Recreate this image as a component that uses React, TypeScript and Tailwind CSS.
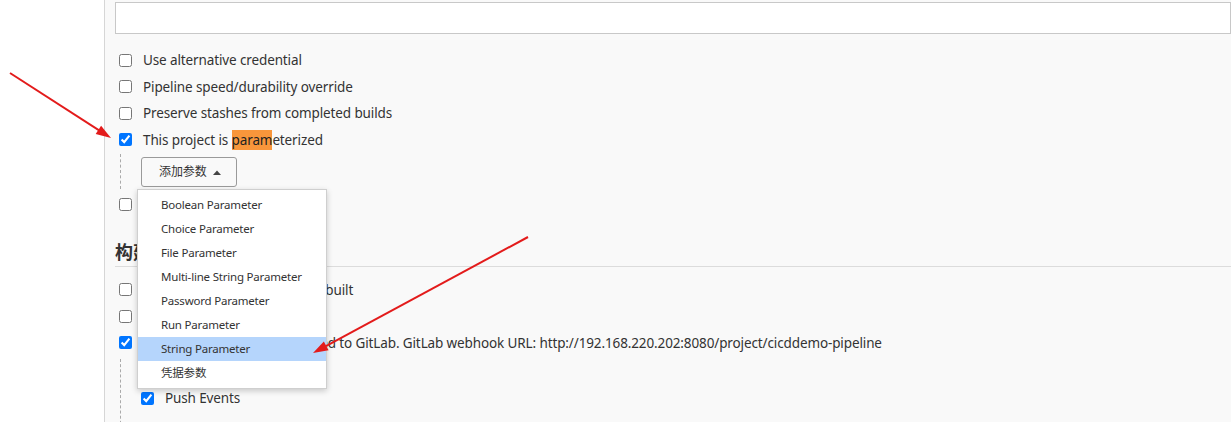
import React from 'react';

const font = { fontFamily: '"Noto Sans", "Noto Sans CJK SC", sans-serif' };

const params = [
  'Boolean Parameter',
  'Choice Parameter',
  'File Parameter',
  'Multi-line String Parameter',
  'Password Parameter',
  'Run Parameter',
  'String Parameter',
  '凭据参数',
];

function Check({ checked = false, label }: { checked?: boolean; label: React.ReactNode }) {
  return (
    <label className="flex h-[26.5px] items-center gap-[11px] whitespace-nowrap pl-[4px]">
      <input type="checkbox" readOnly checked={checked} className="m-0 h-[13px] w-[13px] accent-[#0075ff]" />
      <span>{label}</span>
    </label>
  );
}

function arrowHead(x1: number, y1: number, x2: number, y2: number) {
  const a = Math.atan2(y2 - y1, x2 - x1);
  const len = 15;
  const w = 5;
  const bx = x2 - len * Math.cos(a);
  const by = y2 - len * Math.sin(a);
  const px = -Math.sin(a) * w;
  const py = Math.cos(a) * w;
  return `${x2},${y2} ${bx + px},${by + py} ${bx - px},${by - py}`;
}

export default function App() {
  const arrows = [
    [10, 73, 111, 138],
    [528, 237, 313, 353],
  ];
  return (
    <div className="relative flex h-[422px] w-[1231px] overflow-hidden bg-white text-[13.5px] tracking-[-0.12px] text-[#333]" style={font}>
      <div className="w-[104px] shrink-0 bg-white" />
      <div className="flex-1 border-l border-[#d6d6d6] bg-[#f9f9f9] pl-[10px]">
        {/* text field */}
        <div className="mt-[2px] h-[32px] border border-[#c8c8c8] bg-white" />

        <div className="mt-[13px]">
          <Check label="Use alternative credential" />
          <Check label="Pipeline speed/durability override" />
          <Check label="Preserve stashes from completed builds" />
          <Check
            checked
            label={
              <>
                This project is <span className="bg-[#f9963b] py-[1px] text-[#222]">param</span>eterized
              </>
            }
          />
        </div>

        {/* parameters block */}
        <div className="relative ml-[5px] mt-[1px] border-l border-dashed border-[#aaa] pb-[2px] pl-[20px] pt-[3px]">
          <button className="flex h-[30px] w-[96px] items-center gap-[6px] rounded-[3px] border border-[#9a9a9a] bg-[#f9f9f9] pl-[17px] text-[12px] text-[#333]">
            添加参数
            <svg width="8" height="5" viewBox="0 0 8 5">
              <path d="M0 5L4 0.5L8 5Z" fill="#444" />
            </svg>
          </button>

          {/* dropdown menu */}
          <div className="absolute left-[16px] top-[35px] z-10 w-[190px] border border-[#cfcfcf] bg-white pb-[3px] pt-[3px] shadow-[0_2px_6px_rgba(0,0,0,0.2)]">
            {params.map((p) => (
              <div
                key={p}
                className={`flex h-[24px] items-center pl-[23px] text-[11.5px] tracking-[-0.2px] text-[#333] ${p === 'String Parameter' ? 'bg-[#b5d5fc]' : ''}`}
              >
                {p}
              </div>
            ))}
          </div>
        </div>

        <div className="mt-[2px]">
          <Check label="Quiet period" />
        </div>

        {/* section heading */}
        <div className="mt-[22px] border-b border-[#dcdcdc] pb-[2px] text-[18px] font-bold leading-[24px] tracking-normal text-[#333]">
          构建触发器
        </div>

        <div className="mt-[10px]">
          <Check label="Build after other projects are built" />
          <Check label="Build periodically" />
          <Check
            checked
            label="Build when a change is pushed to GitLab. GitLab webhook URL: http://192.168.220.202:8080/project/cicddemo-pipeline"
          />
        </div>

        <div className="ml-[5px] mt-[3px] h-[70px] border-l border-dashed border-[#aaa] pl-[20px] pt-[26px]">
          <label className="flex h-[26px] items-center gap-[11px] whitespace-nowrap">
            <input type="checkbox" readOnly checked className="m-0 h-[13px] w-[13px] accent-[#0075ff]" />
            <span>Push Events</span>
          </label>
        </div>
      </div>

      {/* red annotation arrows */}
      <svg className="pointer-events-none absolute left-0 top-0 z-20" width="1231" height="422">
        {arrows.map(([x1, y1, x2, y2], i) => (
          <g key={i}>
            <line x1={x1} y1={y1} x2={x2 - (x2 - x1) * 0.06} y2={y2 - (y2 - y1) * 0.06} stroke="#e31b1b" strokeWidth="2" />
            <polygon points={arrowHead(x1, y1, x2, y2)} fill="#e31b1b" />
          </g>
        ))}
      </svg>
    </div>
  );
}
